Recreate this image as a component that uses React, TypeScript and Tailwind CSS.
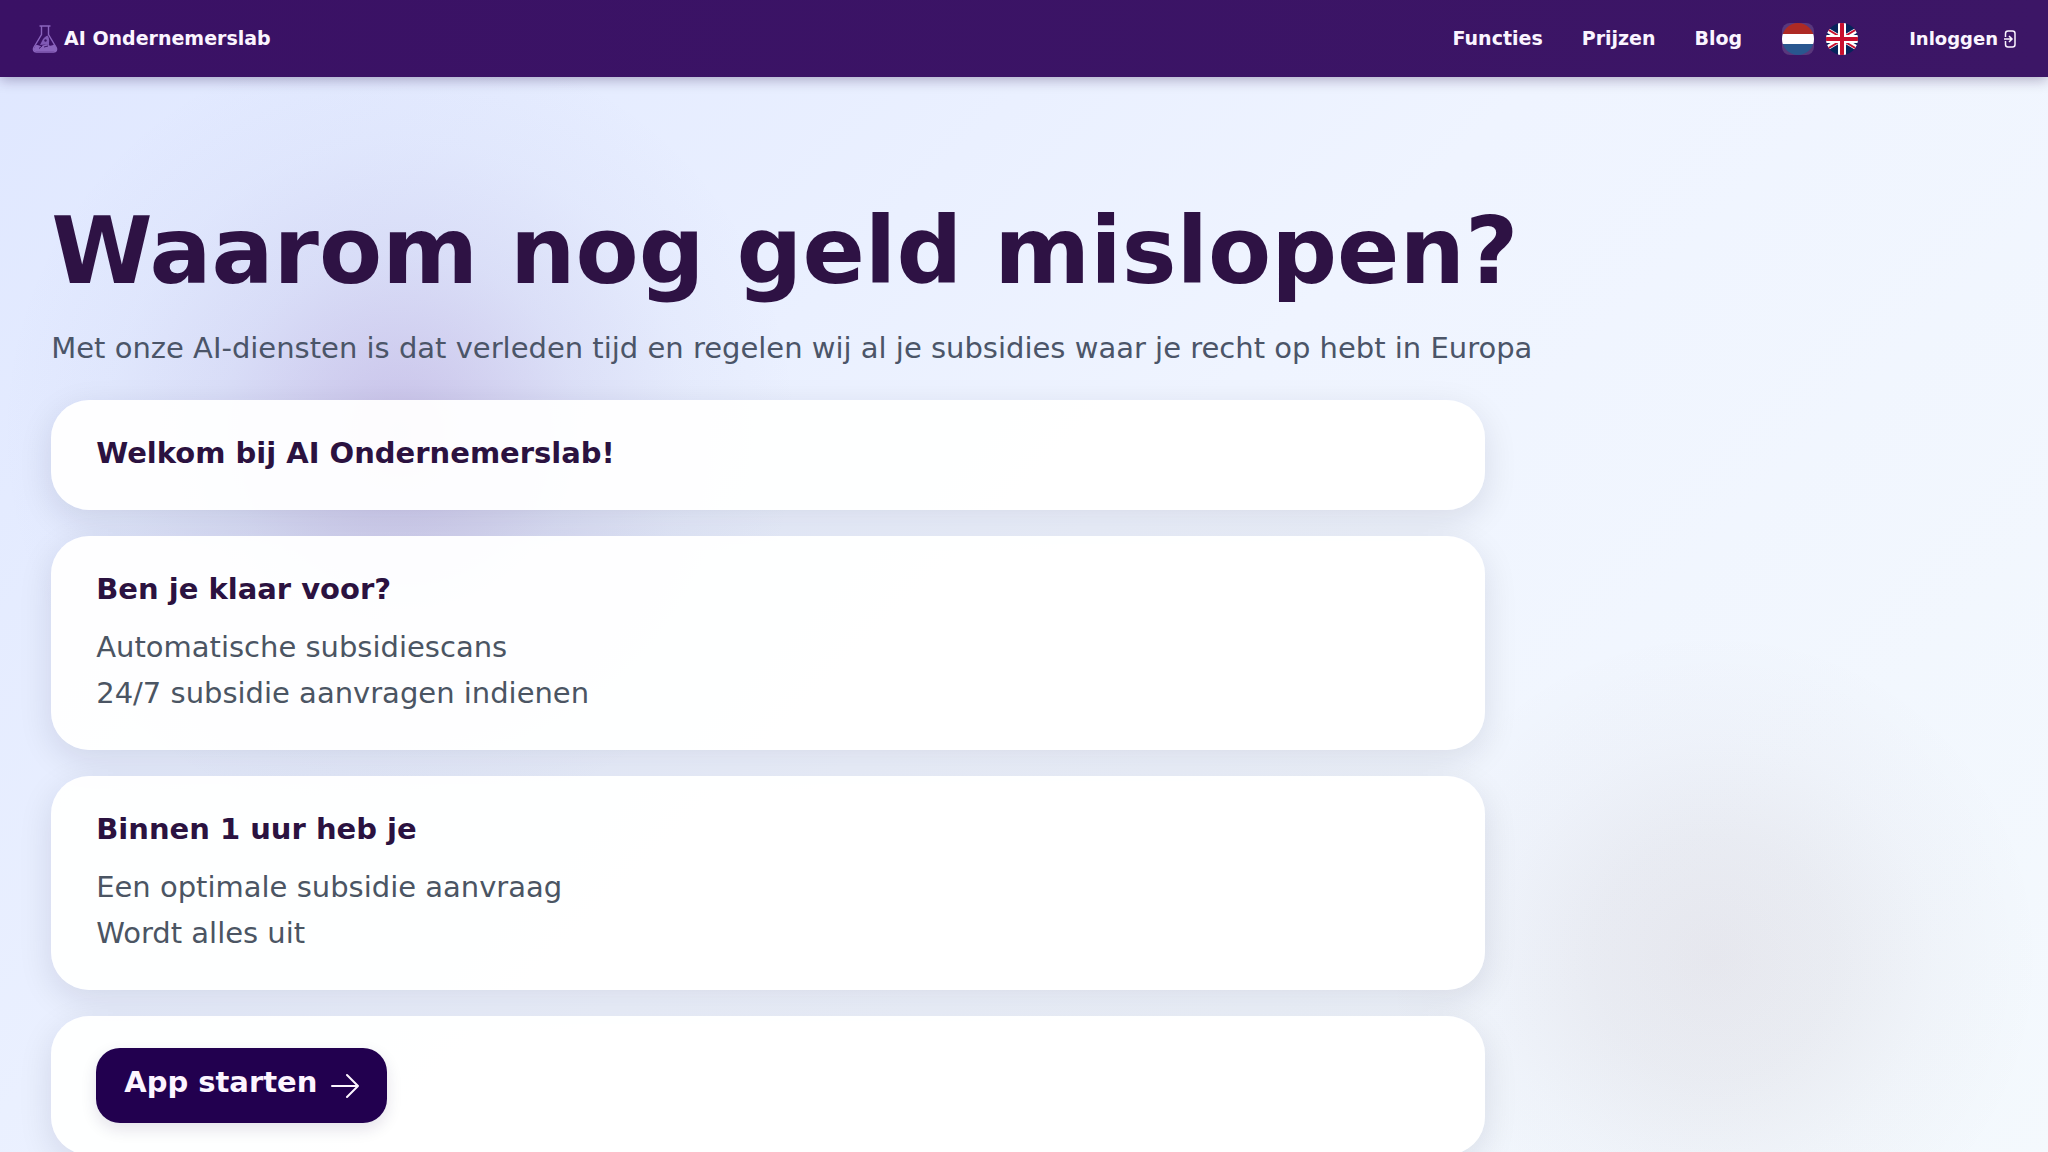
import type { ReactNode } from "react";

function FlaskLogo() {
  return (
    <svg viewBox="0 0 26 28" className="h-7 w-[26px]" fill="none" aria-hidden="true">
      <path
        d="M8 1h10M9.500 1.500v8L1.800 22.500c-1.300 2.400 0 4.500 2.500 4.500h17.400c2.500 0 3.800-2.100 2.500-4.500L16.500 9.500v-8"
        stroke="#8a64bd"
        strokeWidth="1.400"
        strokeLinecap="round"
      />
      <path
        d="M3.500 20.500c2.500-1.500 4 .8 6 .5 2.500-.5 4-3 7-1 2 1.500 4 0 6-.5l2.300 4c.5 1.500-.5 2.800-2 2.800H3.800c-1.500 0-2.500-1-2-2.500z"
        fill="#8a64bd"
      />
      <path d="M15.500 10.500c1.500 2 2 4.500 1.500 7.500v2l-4-.5-5 .5 2-4c1-2.500 3-4.500 5.500-5.500z" fill="#8059b5" />
      <circle cx="13.500" cy="15.500" r="1.200" fill="#3b1466" />
      <path d="M7 23.500l3-2.500M12 22l4-1" stroke="#3b1466" strokeWidth="1" />
    </svg>
  );
}

function DutchFlag() {
  return (
    <svg viewBox="0 0 32 32" className="h-8 w-8" aria-hidden="true">
      <clipPath id="nl">
        <circle cx="16" cy="16" r="16" />
      </clipPath>
      <g clipPath="url(#nl)">
        <rect width="32" height="11" fill="#ae2a24" />
        <rect y="11" width="32" height="10" fill="#fff" />
        <rect y="21" width="32" height="11" fill="#29578f" />
      </g>
    </svg>
  );
}

function BritishFlag() {
  return (
    <svg viewBox="0 0 32 32" className="h-8 w-8" aria-hidden="true">
      <clipPath id="gb">
        <circle cx="16" cy="16" r="16" />
      </clipPath>
      <g clipPath="url(#gb)">
        <rect width="32" height="32" fill="#06245c" />
        <path d="M-4 4l40 24M-4 28L36 4" stroke="#fff" strokeWidth="5" />
        <path d="M-4 3l20 12M36 29L16 17M-4 29l20-12M36 3L16 15" stroke="#c8102e" strokeWidth="2" />
        <path d="M16 0v32M0 16h32" stroke="#fff" strokeWidth="8" />
        <path d="M16 0v32M0 16h32" stroke="#c8102e" strokeWidth="4" />
      </g>
    </svg>
  );
}

function LoginIcon() {
  return (
    <svg viewBox="0 0 12 18" className="h-[18px] w-3" fill="none" stroke="#fbf5ff" aria-hidden="true">
      <path d="M1.500 7V3.500q0-2.500 2.500-2.500h4.500q2.500 0 2.500 2.500v11q0 2.500-2.500 2.500H4q-2.500 0-2.500-2.500V11" strokeWidth="1.500" />
      <path d="M0 9h8M5 6l3 3-3 3" strokeWidth="1.500" />
    </svg>
  );
}

const navLinks = ["Functies", "Prijzen", "Blog"];

function Header() {
  return (
    <header className="relative z-10 flex h-[77px] items-center justify-between bg-linear-to-r from-[#3a1165] to-[#3c1666] px-8 font-bold text-[#fbf5ff] shadow-[0_3px_12px_rgba(30,10,70,0.3)]">
      <a href="#" className="flex items-center gap-1.5 text-[19px]">
        <FlaskLogo />
        AI Ondernemerslab
      </a>
      <nav className="flex items-center text-[19px]">
        <div className="flex gap-[39px]">
          {navLinks.map((label) => (
            <a key={label} href="#">
              {label}
            </a>
          ))}
        </div>
        <div className="ml-10 flex gap-3">
          <button aria-label="Nederlands" className="rounded-lg bg-white/15">
            <DutchFlag />
          </button>
          <button aria-label="English">
            <BritishFlag />
          </button>
        </div>
        <a href="#" className="ml-[51px] flex items-center gap-1.5 text-[18px]">
          Inloggen
          <LoginIcon />
        </a>
      </nav>
    </header>
  );
}

function Card({ title, children }: { title: string; children?: ReactNode }) {
  return (
    <section className="rounded-[38px] bg-white/95 px-[45px] pt-[30px] pb-[34px] shadow-[0_10px_34px_rgba(20,20,45,0.11)]">
      <h2 className="text-[29px] leading-[46px] font-bold text-[#2b1240]">{title}</h2>
      {children}
    </section>
  );
}

function Lines({ items }: { items: string[] }) {
  return (
    <ul className="mt-3 text-[29px] leading-[46px] text-[#4b5563]">
      {items.map((item) => (
        <li key={item}>{item}</li>
      ))}
    </ul>
  );
}

export default function App() {
  return (
    <div className="min-h-screen bg-linear-135 from-[#dfe7ff] via-[#eff4ff] to-[#f4f9fd] font-['DejaVu_Sans',sans-serif]">
      <Header />
      <main className="relative overflow-hidden px-[2.5%] pt-32 pb-6">
        {/* soft colour spots behind the content */}
        <div className="pointer-events-none absolute inset-0 bg-[radial-gradient(circle_at_400px_355px,rgba(100,50,160,0.23),rgba(90,70,170,0.09)_180px,rgba(90,90,180,0.03)_290px,transparent_400px),radial-gradient(circle_at_1714px_882px,rgba(70,20,30,0.07),rgba(60,20,30,0.05)_120px,rgba(60,20,40,0.02)_220px,transparent_330px)]" />
        <div className="relative">
          <h1 className="text-[92px] leading-[94px] font-bold text-[#2e1244]">Waarom nog geld mislopen?</h1>
          <p className="mt-[26px] text-[29px] leading-[46px] text-[#4b5568]">
            Met onze AI-diensten is dat verleden tijd en regelen wij al je subsidies waar je recht op hebt in Europa
          </p>
          <div className="mt-[29px] flex w-[1434px] max-w-full flex-col gap-[26px]">
            <Card title="Welkom bij AI Ondernemerslab!" />
            <Card title="Ben je klaar voor?">
              <Lines items={["Automatische subsidiescans", "24/7 subsidie aanvragen indienen"]} />
            </Card>
            <Card title="Binnen 1 uur heb je">
              <Lines items={["Een optimale subsidie aanvraag", "Wordt alles uit"]} />
            </Card>
            <section className="rounded-[38px] bg-white/95 px-[45px] py-8 shadow-[0_10px_34px_rgba(20,20,45,0.11)]">
              <button className="flex h-[75px] items-center gap-3.5 rounded-3xl bg-[#22004f] px-7 text-[29px] font-bold text-[#fdf5ff] shadow-[0_6px_16px_rgba(30,20,70,0.12)]">
                <span className="pb-1.5">App starten</span>
                <svg viewBox="0 0 28 28" className="h-7 w-7" fill="none" stroke="currentColor" strokeWidth="2" aria-hidden="true">
                  <path d="M1 14h26M16 3l11 11-11 11" strokeLinecap="round" strokeLinejoin="round" />
                </svg>
              </button>
            </section>
          </div>
        </div>
      </main>
    </div>
  );
}
